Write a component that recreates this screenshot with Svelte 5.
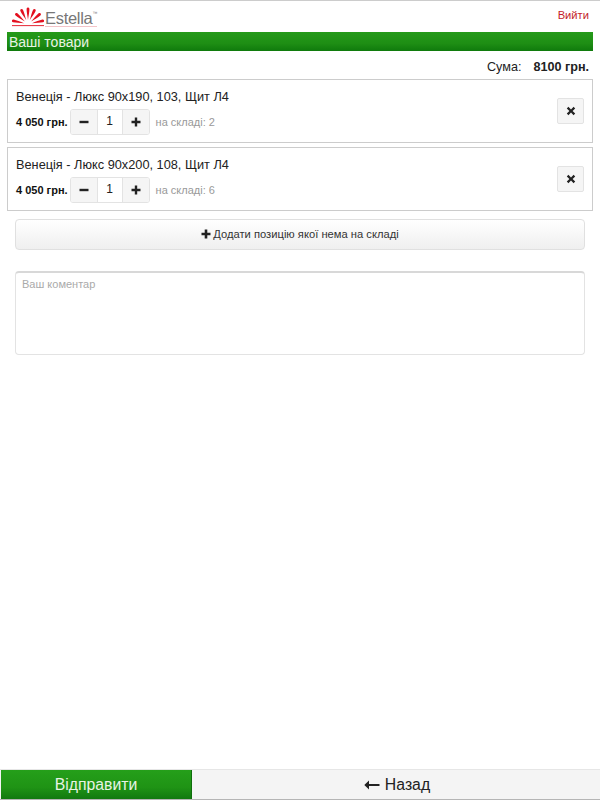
<script>
  const items = [
    { name: 'Венеція - Люкс 90х190, 103, Щит Л4', price: '4 050 грн.', qty: 1, stock: 2 },
    { name: 'Венеція - Люкс 90х200, 108, Щит Л4', price: '4 050 грн.', qty: 1, stock: 6 }
  ];
  const petals = [-78, -50, -25, 0, 25, 50, 78];
</script>

<div class="page">
  <header class="top">
    <div class="logo">
      <svg width="32" height="20" viewBox="0 0 32 20" aria-hidden="true">
        <g fill="#e3101f">
          {#each petals as a}
            <path transform="rotate({a} 16 17)" d="M16 13 C15.5 9 14.6 5 14.6 2 C14.7 0 17.3 0 17.4 2 C17.4 5 16.5 9 16 13 Z" />
          {/each}
        </g>
        <rect x="0" y="18.2" width="32" height="0.9" fill="#e3101f" />
      </svg>
      <span class="brand">Estella<sup>™</sup></span>
    </div>
    <a class="logout" href="#logout">Вийти</a>
  </header>

  <h1 class="title">Ваші товари</h1>

  <div class="sum"><span>Сума:</span><b>8100 грн.</b></div>

  <div class="list">
    {#each items as item}
      <div class="card">
        <div class="info">
          <div class="name">{item.name}</div>
          <div class="row">
            <b class="price">{item.price}</b>
            <div class="stepper">
              <button class="step" aria-label="minus">
                <svg width="10" height="10" viewBox="0 0 10 10"><rect x="0.5" y="3.8" width="9" height="2.4" fill="#222" /></svg>
              </button>
              <span class="qty">{item.qty}</span>
              <button class="step" aria-label="plus">
                <svg width="10" height="10" viewBox="0 0 10 10"><path d="M3.8 0.5h2.4v3.3h3.3v2.4H6.2v3.3H3.8V6.2H0.5V3.8h3.3z" fill="#222" /></svg>
              </button>
            </div>
            <span class="stock">на складі: {item.stock}</span>
          </div>
        </div>
        <button class="remove" aria-label="remove">
          <svg width="10" height="10" viewBox="0 0 10 10"><path d="M2.4 0.8 5 3.4 7.6 0.8 9.2 2.4 6.6 5 9.2 7.6 7.6 9.2 5 6.6 2.4 9.2 0.8 7.6 3.4 5 0.8 2.4z" fill="#222" /></svg>
        </button>
      </div>
    {/each}
  </div>

  <button class="add">
    <svg width="10" height="10" viewBox="0 0 10 10"><path d="M3.7 0.5h2.6v3.2h3.2v2.6H6.3v3.2H3.7V6.3H0.5V3.7h3.2z" fill="#222" /></svg>
    Додати позицію якої нема на складі
  </button>

  <textarea class="comment" placeholder="Ваш коментар"></textarea>

  <footer class="bottom">
    <button class="send">Відправити</button>
    <button class="back">
      <svg width="16" height="10" viewBox="0 0 16 10"><path d="M5 0.5 V4 H15.5 V6 H5 V9.5 L0.3 5 Z" fill="#222" /></svg>
      Назад
    </button>
  </footer>
</div>

<style>
  :global(body) { margin: 0; background: #fff; }
  .page {
    box-sizing: border-box;
    height: 800px;
    display: flex;
    flex-direction: column;
    font-family: "Liberation Sans", Arial, sans-serif;
    color: #222;
    border-top: 1px solid #ccc;
    overflow: hidden;
  }
  button { font-family: inherit; margin: 0; cursor: pointer; }
  .top {
    height: 31px;
    display: flex;
    justify-content: space-between;
    padding: 0 11px 0 12px;
  }
  .logo { display: flex; align-items: flex-start; padding-top: 6px; height: 20px; }
  .brand {
    font-size: 16.5px;
    line-height: 22px;
    color: #777;
    margin-left: 1px;
    letter-spacing: -0.3px;
    height: 19px;
    box-shadow: 0 1px 0 #f3c4c8;
  }
  .brand sup { font-size: 5px; vertical-align: 9px; line-height: 0; }
  .logout { font-size: 11.2px; color: #c41e2a; text-decoration: none; margin-top: 8px; line-height: 13px; }
  .title {
    margin: 0 7px;
    height: 19px;
    padding-left: 2px;
    font-size: 14px;
    font-weight: 400;
    line-height: 20px;
    color: #e8f3e4;
    background: linear-gradient(#259a1a, #1e8e14 60%, #0f7a0c);
  }
  .sum {
    height: 28px;
    display: flex;
    justify-content: flex-end;
    align-items: center;
    gap: 12px;
    padding-right: 11px;
    font-size: 12.6px;
    color: #222;
    position: relative;
    top: 2px;
  }
  .list { display: flex; flex-direction: column; gap: 4px; margin: 0 7px; }
  .card {
    box-sizing: border-box;
    height: 64px;
    border: 1px solid #ccc;
    display: flex;
    align-items: center;
    justify-content: space-between;
    padding: 0 8px 0 8px;
  }
  .name { font-size: 12.75px; line-height: 18px; height: 16px; color: #222; margin-bottom: 5px; }
  .row { display: flex; align-items: center; height: 26px; }
  .price { font-size: 11px; line-height: 15px; color: #111; margin-right: 2px; padding-top: 1px; }
  .stepper {
    box-sizing: border-box;
    display: flex;
    align-items: stretch;
    height: 26px;
    width: 80px;
    border: 1px solid #e3e3e3;
    border-radius: 3px;
    overflow: hidden;
  }
  .step {
    flex: 0 0 26px;
    display: flex;
    align-items: center;
    justify-content: center;
    padding: 0;
    border: 0;
    background: #f5f5f5;
  }
  .qty {
    flex: 1;
    text-align: center;
    font-size: 12px;
    line-height: 22px;
    border-left: 1px solid #e3e3e3;
    border-right: 1px solid #e3e3e3;
  }
  .stock { font-size: 11px; color: #999; margin-left: 6px; }
  .remove {
    box-sizing: border-box;
    width: 27px;
    height: 26px;
    display: flex;
    align-items: center;
    justify-content: center;
    padding: 0;
    background: #f5f5f5;
    border: 1px solid #e3e3e3;
    border-radius: 2px;
  }
  .add {
    box-sizing: border-box;
    flex: none;
    height: 31px;
    margin: 8px 15px 0;
    display: flex;
    align-items: center;
    justify-content: center;
    gap: 2px;
    padding: 0 0 1px;
    font-size: 11.2px;
    color: #333;
    background: linear-gradient(#fff, #efefef);
    border: 1px solid #e0e0e0;
    border-radius: 4px;
  }
  .comment {
    box-sizing: border-box;
    flex: none;
    display: block;
    width: 570px;
    height: 84px;
    margin: 21px 15px 0;
    padding: 5px 6px;
    font-family: inherit;
    font-size: 11px;
    border: 1px solid #e3e3e3;
    border-top: 2px solid #d8d8d8;
    border-radius: 4px;
    resize: none;
    outline: none;
  }
  .comment::placeholder { color: #aaa; opacity: 1; }
  .bottom {
    margin-top: auto;
    box-sizing: border-box;
    flex: none;
    height: 31px;
    display: flex;
    background: #f4f4f4;
    border-top: 1px solid #e6e6e6;
    border-bottom: 1px solid #b5b5b5;
  }
  .send {
    box-sizing: border-box;
    width: 191px;
    margin-left: 1px;
    border: 0;
    padding: 0;
    font-size: 15.8px;
    color: #e8f3e4;
    background: linear-gradient(#259f1a, #1f9315 60%, #11790f);
    border-right: 1px solid #0f6e0c;
  }
  .back {
    flex: 1;
    border: 0;
    padding: 0 0 0 2px;
    background: none;
    color: #222;
    font-size: 15.8px;
    display: flex;
    align-items: center;
    justify-content: center;
    gap: 5px;
  }
</style>
